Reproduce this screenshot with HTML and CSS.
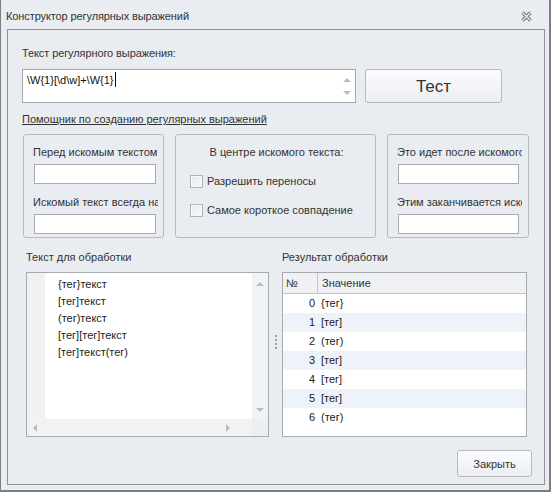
FILE: index.html
```
<!DOCTYPE html>
<html>
<head>
<meta charset="utf-8">
<link rel="stylesheet" href="styles.css">
</head>
<body>
<div class="window">
  <div class="titlebar">
    <span class="title">Конструктор регулярных выражений</span>
    <svg class="close-x" width="11" height="11" viewBox="0 0 11 11">
      <path d="M1.5 1.5 L9.5 9.5 M9.5 1.5 L1.5 9.5" stroke="#6f7378" stroke-width="3.2" fill="none"/>
      <path d="M1.5 1.5 L9.5 9.5 M9.5 1.5 L1.5 9.5" stroke="#eceff2" stroke-width="1.2" fill="none"/>
    </svg>
  </div>
  <div class="panel">
    <div class="lbl regex-lbl">Текст регулярного выражения:</div>
    <div class="regex-row">
      <div class="regex-box">
        <div class="regex-text">\W{1}[\d\w]+\W{1}<span class="caret"></span></div>
        <div class="mini-scroll">
          <span class="tri up"></span>
          <span class="tri down"></span>
        </div>
      </div>
      <div class="btn test-btn">Тест</div>
    </div>
    <div class="link-row"><span class="link">Помощник по созданию регулярных выражений</span></div>
    <div class="groups">
      <div class="group g1">
        <div class="glbl">Перед искомым текстом</div>
        <div class="input"></div>
        <div class="glbl">Искомый текст всегда на</div>
        <div class="input"></div>
      </div>
      <div class="group g2">
        <div class="gtitle">В центре искомого текста:</div>
        <div class="check-row"><span class="cb"></span><span>Разрешить переносы</span></div>
        <div class="check-row"><span class="cb"></span><span>Самое короткое совпадение</span></div>
      </div>
      <div class="group g3">
        <div class="glbl">Это идет после искомого</div>
        <div class="input"></div>
        <div class="glbl">Этим заканчивается искомый</div>
        <div class="input"></div>
      </div>
    </div>
    <div class="lower">
      <div class="col col-left">
        <div class="lbl cap">Текст для обработки</div>
        <div class="textbox">
          <div class="tb-main">
            <div class="gutter"></div>
            <div class="lines">
              <div class="line">{тег}текст</div>
              <div class="line">[тег]текст</div>
              <div class="line">(тег)текст</div>
              <div class="line">[тег][тег]текст</div>
              <div class="line">[тег]текст(тег)</div>
            </div>
            <div class="vbar">
              <span class="tri up"></span>
              <span class="tri down"></span>
            </div>
          </div>
          <div class="hbar">
            <div class="hbar-track">
              <span class="tri left"></span>
              <span class="tri right"></span>
            </div>
            <div class="corner"></div>
          </div>
        </div>
      </div>
      <div class="splitter">
        <span class="dot"></span><span class="dot"></span><span class="dot"></span><span class="dot"></span>
      </div>
      <div class="col col-right">
        <div class="lbl cap">Результат обработки</div>
        <div class="grid">
          <div class="ghead">
            <div class="c-num">№</div>
            <div class="c-val">Значение</div>
          </div>
          <div class="grow"><div class="c-num">0</div><div class="c-val">{тег}</div></div>
          <div class="grow alt"><div class="c-num">1</div><div class="c-val">[тег]</div></div>
          <div class="grow"><div class="c-num">2</div><div class="c-val">(тег)</div></div>
          <div class="grow alt"><div class="c-num">3</div><div class="c-val">[тег]</div></div>
          <div class="grow"><div class="c-num">4</div><div class="c-val">[тег]</div></div>
          <div class="grow alt"><div class="c-num">5</div><div class="c-val">[тег]</div></div>
          <div class="grow"><div class="c-num">6</div><div class="c-val">(тег)</div></div>
        </div>
      </div>
    </div>
    <div class="footer">
      <div class="btn close-btn">Закрыть</div>
    </div>
  </div>
</div>
</body>
</html>
```
FILE: styles.css
```
* { box-sizing: border-box; }
html, body { margin: 0; padding: 0; }
body {
  width: 551px;
  height: 492px;
  overflow: hidden;
  background: #e9ecf0;
  font-family: "Liberation Sans", Arial, sans-serif;
  font-size: 11px;
  color: #333;
}
.window {
  width: 551px;
  height: 492px;
  background: #e9ecf0;
  border-left: 1px solid #7b7f84;
  border-right: 2px solid #7b7f84;
  border-bottom: 2px solid #7b7f84;
  display: flex;
  flex-direction: column;
}
.titlebar {
  height: 29px;
  flex: none;
  display: flex;
  align-items: center;
  justify-content: space-between;
  padding: 0 17px 0 5px;
}
.title { font-size: 11px; letter-spacing: -0.1px; color: #333; position: relative; top: 1px; }
.close-x { position: relative; top: 2px; }
.panel {
  flex: none;
  margin: 0 4px 0 6px;
  height: 456px;
  border: 1px solid #8e9398;
  padding: 16px 12px 0 14px;
  display: flex;
  flex-direction: column;
}
.panel > * { flex: none; }
.lbl { line-height: 14px; height: 14px; white-space: nowrap; }
.regex-lbl { margin-bottom: 9px; letter-spacing: -0.1px; }
.regex-row { display: flex; height: 34px; gap: 9px; }
.regex-box {
  width: 334px;
  height: 34px;
  background: #fff;
  border: 1px solid #a3a8ad;
  display: flex;
  justify-content: space-between;
}
.regex-text {
  padding: 3px 0 0 4px;
  font-size: 11px;
  color: #111;
  line-height: 14px;
  display: flex;
  align-items: flex-start;
}
.caret { display: inline-block; width: 1px; height: 15px; background: #111; margin-left: 1px; margin-top: -1px; }
.mini-scroll {
  width: 17px;
  display: flex;
  flex-direction: column;
  justify-content: space-between;
  align-items: center;
  padding: 8px 0 7px;
}
.tri { display: block; width: 0; height: 0; }
.tri.up { border-left: 4px solid transparent; border-right: 4px solid transparent; border-bottom: 4px solid #b9bdc2; }
.tri.down { border-left: 4px solid transparent; border-right: 4px solid transparent; border-top: 4px solid #b9bdc2; }
.tri.left { border-top: 4px solid transparent; border-bottom: 4px solid transparent; border-right: 4px solid #b9bdc2; }
.tri.right { border-top: 4px solid transparent; border-bottom: 4px solid transparent; border-left: 4px solid #b9bdc2; }
.btn {
  display: flex;
  align-items: center;
  justify-content: center;
  border: 1px solid #b5b9be;
  border-radius: 3px;
  background: linear-gradient(#fbfbfc, #eceef1);
  color: #333;
}
.test-btn { width: 137px; height: 34px; font-size: 17px; padding-top: 1px; }
.link-row { margin-top: 9px; height: 14px; line-height: 14px; }
.link { text-decoration: underline; color: #333; }
.groups { margin: 8px 0 0 1px; display: flex; gap: 11px; height: 104px; }
.group {
  flex: none;
  border: 1px solid #b6babf;
  border-radius: 3px;
  height: 104px;
  padding: 10px 0 0 9px;
}
.g1 { width: 141px; }
.g2 { width: 201px; padding: 10px 0 0 0; }
.g3 { width: 142px; }
.glbl {
  height: 14px;
  line-height: 14px;
  width: 125px;
  overflow: hidden;
  white-space: nowrap;
}
.group .input {
  width: 122px;
  height: 20px;
  margin: 5px 0 0 1px;
  background: #fff;
  border: 1px solid #a7abb0;
}
.group .glbl + .input + .glbl { margin-top: 11px; }
.g3 .input { width: 121px; }
.gtitle { text-align: center; height: 14px; line-height: 14px; padding-left: 2px; }
.check-row { display: flex; align-items: center; gap: 4px; padding-left: 14px; height: 14px; line-height: 14px; margin-top: 15px; }
.check-row + .check-row { margin-top: 15px; }
.cb {
  width: 13px;
  height: 13px;
  border: 1px solid #b0b4b9;
  background: linear-gradient(135deg, #e6e9ec, #f8f9fa);
  box-shadow: inset 0 0 0 1px #f7f8f9;
  flex: none;
}
.lower { display: flex; margin: 12px 0 0 4px; height: 187px; }
.col { display: flex; flex-direction: column; flex: none; }
.col > * { flex: none; }
.col-left { width: 243px; }
.col-right { width: 245px; }
.cap { margin-bottom: 8px; }
.textbox {
  height: 165px;
  border: 1px solid #a7abb0;
  background: #fff;
  display: flex;
  flex-direction: column;
}
.tb-main { height: 146px; display: flex; flex: none; }
.gutter { width: 18px; background: #f0f1f3; }
.lines { flex: 1; padding: 4px 0 0 13px; color: #222; }
.line { height: 17px; line-height: 14px; white-space: nowrap; }
.vbar {
  width: 16px;
  background: #f1f2f4;
  display: flex;
  flex-direction: column;
  align-items: center;
  justify-content: space-between;
  padding: 9px 0 7px;
}
.hbar { height: 17px; flex: none; display: flex; background: #f1f2f4; }
.hbar-track {
  flex: 1;
  display: flex;
  align-items: center;
  justify-content: space-between;
  padding: 0 22px 0 6px;
}
.corner { width: 16px; background: #eceef0; }
.splitter {
  width: 13px;
  flex: none;
  display: flex;
  flex-direction: column;
  align-items: center;
  padding-top: 85px;
  gap: 2px;
}
.dot { width: 2px; height: 2px; background: #9ea3a8; display: block; }
.grid {
  height: 165px;
  border: 1px solid #a7abb0;
  background: #fff;
}
.ghead {
  display: flex;
  height: 21px;
  background: #eff1f4;
  border-bottom: 1px solid #c2c6cb;
}
.ghead .c-num { width: 35px; border-right: 1px solid #c2c6cb; padding: 3px 0 0 3px; line-height: 14px; }
.ghead .c-val { padding: 3px 0 0 4px; line-height: 14px; }
.grow { display: flex; height: 19px; line-height: 19px; color: #222; }
.grow.alt { background: #eef3f9; }
.grow .c-num { width: 35px; text-align: right; padding-right: 3px; }
.grow .c-val { padding-left: 3px; }
.footer { display: flex; justify-content: flex-end; margin-top: 13px; }
.close-btn { width: 75px; height: 27px; font-size: 11px; }
```
